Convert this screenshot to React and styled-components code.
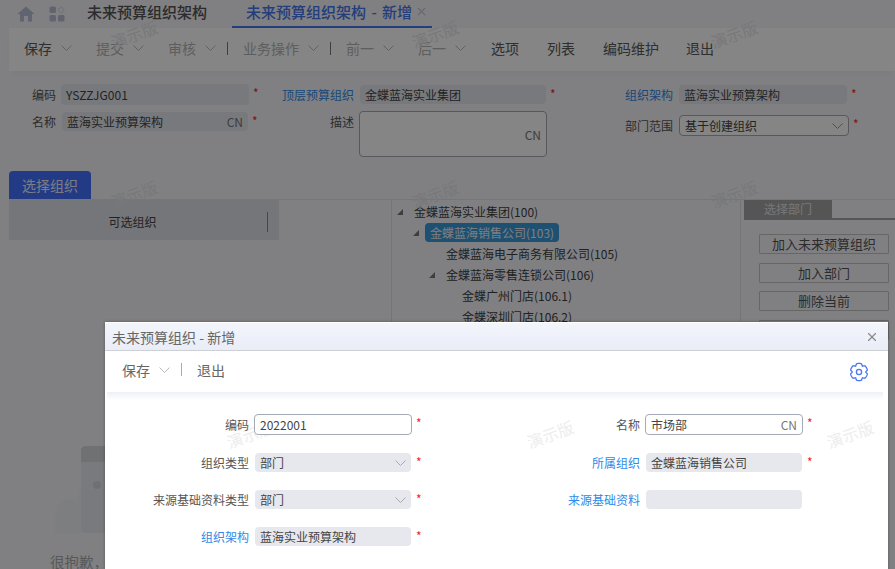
import React from "react";
import styled, { createGlobalStyle } from "styled-components";
import { X } from "lucide-react";

const GlobalStyle = createGlobalStyle`
  html, body { margin: 0; padding: 0; }
  body {
    font-family: "Noto Sans CJK SC", "Noto Sans", sans-serif;
    font-size: 12px;
    color: #444;
  }
`;

const Page = styled.div`
  position: relative;
  width: 895px;
  height: 569px;
  overflow: hidden;
  background: #f5f6f9;
`;

const Overlay = styled.div`
  position: absolute;
  inset: 0;
  background: rgba(0, 0, 0, 0.48);
`;

const Watermark = styled.span`
  position: absolute;
  left: ${(p) => p.$x}px;
  top: ${(p) => p.$y}px;
  width: 48px;
  font-size: 16px;
  line-height: 22px;
  color: ${(p) => p.$color || "#e6e7ea"};
  transform: rotate(-20deg);
  white-space: nowrap;
`;

/* top tabs */
const TopBar = styled.div`
  display: flex;
  align-items: center;
  height: 28px;
  padding-left: 17px;
`;
const IconSlot = styled.span`
  display: flex;
  margin-right: ${(p) => p.$gap}px;
`;
const PageTitle = styled.div`
  font-size: 15px;
  font-weight: 500;
  line-height: 24px;
  padding-bottom: 4px;
  color: #555;
  margin-right: 25px;
`;
const ActiveTab = styled.div`
  display: flex;
  align-items: center;
  justify-content: space-between;
  box-sizing: border-box;
  width: 200px;
  height: 28px;
  padding: 0 4px 4px 14px;
  border-bottom: 2px solid #4675ee;
  font-size: 15px;
  font-weight: 500;
  word-spacing: 2px;
  white-space: nowrap;
  color: #4675ee;
  svg { color: #c6cad6; }
`;

/* toolbar */
const Toolbar = styled.div`
  display: flex;
  align-items: center;
  box-sizing: border-box;
  height: 43px;
  margin-left: 9px;
  padding: 0 0 3px 15px;
  background: #fff;
  font-size: 14px;
  box-shadow: 0 4px 6px -1px rgba(0, 0, 0, 0.04);
`;
const ToolItem = styled.span`
  display: flex;
  align-items: center;
  gap: 9px;
  margin-right: ${(p) => p.$gap ?? 24}px;
  color: ${(p) => (p.$muted ? "#b4b4b4" : "#5a5a5a")};
`;
const ToolDivider = styled.i`
  width: 1px;
  height: 13px;
  margin: 0 15px 0 -13px;
  background: #777;
`;
const Chevron = ({ color = "#b8bac0" }) => (
  <svg width="11" height="6" viewBox="0 0 11 6" fill="none">
    <polyline points="0.5,0.5 5.5,5.5 10.5,0.5" stroke={color} strokeWidth="1" />
  </svg>
);

/* form bits, shared by page and dialog */
const Field = styled.div`
  display: flex;
  align-items: ${(p) => (p.$top ? "flex-start" : "center")};
  padding-left: ${(p) => p.$inset ?? 0}px;
`;
const Label = styled.label`
  flex: none;
  width: ${(p) => p.$w}px;
  margin-right: ${(p) => p.$gap ?? 5}px;
  text-align: right;
  white-space: nowrap;
  line-height: ${(p) => (p.$top ? "21px" : "inherit")};
  color: ${(p) => (p.$link ? "#2f8ae8" : "#555")};
`;
const Control = styled.div`
  flex: none;
  display: flex;
  align-items: center;
  justify-content: space-between;
  box-sizing: border-box;
  width: ${(p) => p.$w}px;
  height: ${(p) => p.$h ?? 19}px;
  padding: 0 5px;
  border-radius: 4px;
  border: ${(p) => (p.$bordered ? "1px solid #a5a9b5" : "none")};
  background: ${(p) => (p.$bordered ? "#fff" : "#e6e8ee")};
  color: #444;
  white-space: nowrap;
`;
const TextAreaBox = styled(Control)`
  justify-content: flex-end;
`;
const Suffix = styled.span`
  color: #777;
  font-size: 12px;
`;
const Star = styled.span`
  margin-left: ${(p) => p.$gap ?? 4}px;
  line-height: 1;
  color: #f5222d;
  font-size: 12px;
  align-self: flex-start;
  padding-top: 3px;
`;

/* master form */
const TopForm = styled.div`
  display: flex;
  height: 100px;
`;
const FormColumn = styled.div`
  display: flex;
  flex-direction: column;
  flex: none;
  width: ${(p) => p.$w}px;
  padding-top: ${(p) => p.$top}px;
  gap: ${(p) => p.$gap}px;
`;

/* tabs and panels */
const TabStrip = styled.div`
  display: flex;
  padding-left: 9px;
`;
const BlueTab = styled.div`
  width: 82px;
  height: 28px;
  line-height: 28px;
  text-align: center;
  border-radius: 4px 4px 0 0;
  background: #4470ff;
  color: #eef;
  font-size: 14px;
`;
const Panels = styled.div`
  display: flex;
  height: 370px;
  margin-left: 9px;
  border-top: 1px solid #e2e2e2;
`;
const LeftPanel = styled.div`
  flex: none;
  width: 382px;
`;
const ListHeader = styled.div`
  display: flex;
  align-items: center;
  box-sizing: border-box;
  width: 270px;
  height: 40px;
  padding-top: 4px;
  background: #e0e2e8;
`;
const HeaderCell = styled.div`
  width: 259px;
  height: 20px;
  line-height: 20px;
  padding-right: 11px;
  box-sizing: border-box;
  text-align: center;
  border-right: 1px solid #888;
  color: #444;
`;
const EmptyState = styled.div`
  display: flex;
  flex-direction: column;
  align-items: flex-start;
  padding: 206px 0 0 36px;
`;
const EmptyText = styled.div`
  margin-top: 19px;
  padding-left: 5px;
  font-size: 14.5px;
  line-height: 20px;
  color: #aaa;
  white-space: nowrap;
`;
const TreePanel = styled.div`
  flex: none;
  width: 349px;
  box-sizing: border-box;
  padding-top: 1px;
  border-left: 1px solid #e0e0e0;
`;
const TreeRow = styled.div`
  display: flex;
  align-items: center;
  height: 21px;
  padding-left: ${(p) => 5 + p.$level * 16}px;
  white-space: nowrap;
  color: #3f3f3f;
`;
const TreeArrow = styled.i`
  flex: none;
  width: 0;
  height: 0;
  margin-right: 11px;
  border-style: solid;
  border-width: 0 0 6px 6px;
  border-color: transparent transparent ${(p) => (p.$hidden ? "transparent" : "#777")} transparent;
`;
const TreeNode = styled.span`
  height: 19px;
  line-height: 19px;
  padding: 0 5px;
  margin-left: -5px;
  border-radius: 4px;
  background: ${(p) => (p.$selected ? "#3a9ad8" : "transparent")};
  color: ${(p) => (p.$selected ? "#f3f3f3" : "inherit")};
`;
const SidePanel = styled.div`
  flex: 1;
  padding-left: 3px;
  border-left: 1px solid #e0e0e0;
`;
const SideTabs = styled.div`
  height: 18px;
  border-bottom: 2px solid #a3a3a3;
`;
const SideTab = styled.div`
  width: 88px;
  height: 18px;
  line-height: 18px;
  text-align: center;
  background: #a3a3a3;
  color: #e6e6e6;
`;
const SideButtons = styled.div`
  display: flex;
  flex-direction: column;
  gap: 8.67px;
  padding: 14px 0 0 15px;
`;
const SideButton = styled.div`
  box-sizing: border-box;
  width: 130px;
  height: 20px;
  line-height: 18px;
  text-align: center;
  font-size: 13px;
  border: 1px solid #c4c4c4;
  border-radius: 1px;
  color: #555;
`;

/* dialog */
const Modal = styled.div`
  position: absolute;
  left: 105px;
  top: 322px;
  width: 783px;
  height: 300px;
  box-sizing: border-box;
  background: #fff;
  border-top: 1px solid #fff;
  box-shadow: 0 0 3px rgba(0, 0, 0, 0.3);
`;
const ModalTitle = styled.div`
  display: flex;
  align-items: center;
  justify-content: space-between;
  box-sizing: border-box;
  height: 28px;
  padding: 0 9px 0 7px;
  font-size: 14px;
  color: #666;
  background: linear-gradient(#f3f5fb, #e9edf7);
  border-bottom: 1px solid #cfd0d4;
  svg { color: #888; }
`;
const ModalToolbar = styled.div`
  display: flex;
  align-items: center;
  box-sizing: border-box;
  height: 41px;
  padding: 0 19px 4px 17px;
  font-size: 14px;
  color: #666;
`;
const ModalDivider = styled.i`
  width: 1px;
  height: 13px;
  margin: 0 15px 0 11px;
  background: #aaa;
`;
const SaveItem = styled.span`
  display: flex;
  align-items: center;
  gap: 9px;
`;
const GearSlot = styled.span`
  display: flex;
  margin-left: auto;
  margin-top: 4px;
`;
const ModalShade = styled.div`
  height: 8px;
  margin: 0 5px 0 2px;
  background: linear-gradient(#eef0f6, #fff);
`;
const ModalForm = styled.div`
  position: relative;
  display: grid;
  grid-template-columns: 391px 391px;
  row-gap: 18px;
  padding-top: 14px;
`;

const HomeIcon = () => (
  <svg width="18" height="16" viewBox="0 0 18 16">
    <path
      d="M9 0.5 L17.5 8 L15 8 L15 15.5 L11 15.5 L11 10 L7 10 L7 15.5 L3 15.5 L3 8 L0.5 8 Z"
      fill="#b8c0d8"
    />
  </svg>
);

const AppsIcon = () => (
  <svg width="16" height="16" viewBox="0 0 16 16" fill="#b8c0d8">
    <rect x="0.5" y="0.5" width="6.5" height="6.5" rx="1.5" />
    <rect x="0.5" y="9" width="6.5" height="6.5" rx="1.5" />
    <rect x="9" y="9" width="6.5" height="6.5" rx="1.5" />
    <path d="M12.2 0.8 L15.4 4 L12.2 7.2 L9 4 Z" fill="none" stroke="#c8cede" strokeWidth="0.8" />
  </svg>
);

// six flat lobes with narrow notches between them
const gearOutline = Array.from({ length: 144 }, (_, i) => {
  const a = (i / 144) * Math.PI * 2;
  const r = 8.6 - 1.9 * Math.pow(Math.max(0, -Math.cos(6 * a)), 2);
  return `${(10 + r * Math.sin(a)).toFixed(2)},${(10 - r * Math.cos(a)).toFixed(2)}`;
}).join(" ");

const GearIcon = () => (
  <svg width="20" height="20" viewBox="0 0 20 20" fill="none" stroke="#4a76f0" strokeWidth="1.3">
    <polygon points={gearOutline} strokeLinejoin="round" />
    <circle cx="10" cy="10" r="2.6" />
  </svg>
);

const EmptyPicture = () => (
  <svg width="190" height="87" viewBox="0 0 190 87">
    <path d="M10 65 C12 55 24 52 32 54 C34 42 42 34 60 32 L60 87 L10 87 Z" fill="#f0f1f4" />
    <rect x="36" y="0" width="130" height="87" rx="5" fill="#e8eaef" />
    <path d="M36 16 L36 5 Q36 0 41 0 L161 0 Q166 0 166 5 L166 16 Z" fill="#d6d8dd" />
    <circle cx="52" cy="39" r="4" fill="#d4d6db" />
  </svg>
);

const marks = [
  [110, 23],
  [411, 23],
  [710, 23],
  [110, 183],
  [411, 183],
  [710, 183],
];
const modalMarks = [
  [121, 100],
  [421, 100],
  [721, 100],
];

const tools = [
  { text: "保存", arrow: true },
  { text: "提交", arrow: true, muted: true },
  { text: "审核", arrow: true, muted: true },
  { divider: true },
  { text: "业务操作", arrow: true, muted: true },
  { divider: true },
  { text: "前一", arrow: true, muted: true },
  { text: "后一", arrow: true, muted: true, gap: 25 },
  { text: "选项", gap: 28 },
  { text: "列表", gap: 28 },
  { text: "编码维护", gap: 27 },
  { text: "退出" },
];

const tree = [
  { level: 0, text: "金蝶蓝海实业集团(100)", open: true },
  { level: 1, text: "金蝶蓝海销售公司(103)", open: true, selected: true },
  { level: 2, text: "金蝶蓝海电子商务有限公司(105)" },
  { level: 2, text: "金蝶蓝海零售连锁公司(106)", open: true },
  { level: 3, text: "金蝶广州门店(106.1)" },
  { level: 3, text: "金蝶深圳门店(106.2)" },
];

export default function App() {
  return (
    <Page>
      <GlobalStyle />
      <TopBar>
        <IconSlot $gap={14}><HomeIcon /></IconSlot>
        <IconSlot $gap={22}><AppsIcon /></IconSlot>
        <PageTitle>未来预算组织架构</PageTitle>
        <ActiveTab>
          未来预算组织架构 - 新增
          <X size={13} strokeWidth={2.2} />
        </ActiveTab>
      </TopBar>

      <Toolbar>
        {tools.map((t, i) =>
          t.divider ? (
            <ToolDivider key={i} />
          ) : (
            <ToolItem key={i} $muted={t.muted} $gap={t.gap}>
              {t.text}
              {t.arrow && <Chevron />}
            </ToolItem>
          )
        )}
      </Toolbar>

      <TopForm>
        <FormColumn $w={282} $top={13} $gap={7}>
          <Field $inset={9}>
            <Label $w={47} $gap={5}>编码</Label>
            <Control $w={188} $h={21}>YSZZJG001</Control>
            <Star>*</Star>
          </Field>
          <Field $inset={9}>
            <Label $w={47} $gap={6}>名称</Label>
            <Control $w={186}>
              蓝海实业预算架构
              <Suffix>CN</Suffix>
            </Control>
            <Star>*</Star>
          </Field>
        </FormColumn>
        <FormColumn $w={343} $top={14} $gap={7}>
          <Field>
            <Label $w={72} $gap={6} $link>顶层预算组织</Label>
            <Control $w={186}>金蝶蓝海实业集团</Control>
            <Star>*</Star>
          </Field>
          <Field $top>
            <Label $w={72} $top>描述</Label>
            <TextAreaBox $w={188} $h={46} $bordered>
              <Suffix>CN</Suffix>
            </TextAreaBox>
          </Field>
        </FormColumn>
        <FormColumn $w={270} $top={14} $gap={11}>
          <Field>
            <Label $w={48} $gap={6} $link>组织架构</Label>
            <Control $w={168}>蓝海实业预算架构</Control>
            <Star>*</Star>
          </Field>
          <Field>
            <Label $w={48} $gap={6}>部门范围</Label>
            <Control $w={170} $h={21} $bordered>
              基于创建组织
              <Chevron color="#999" />
            </Control>
            <Star>*</Star>
          </Field>
        </FormColumn>
      </TopForm>

      <TabStrip>
        <BlueTab>选择组织</BlueTab>
      </TabStrip>

      <Panels>
        <LeftPanel>
          <ListHeader>
            <HeaderCell>可选组织</HeaderCell>
          </ListHeader>
          <EmptyState>
            <EmptyPicture />
            <EmptyText>很抱歉，没有找到相关数据</EmptyText>
          </EmptyState>
        </LeftPanel>

        <TreePanel>
          {tree.map((n) => (
            <TreeRow key={n.text} $level={n.level}>
              <TreeArrow $hidden={!n.open} />
              <TreeNode $selected={n.selected}>{n.text}</TreeNode>
            </TreeRow>
          ))}
        </TreePanel>

        <SidePanel>
          <SideTabs>
            <SideTab>选择部门</SideTab>
          </SideTabs>
          <SideButtons>
            <SideButton>加入未来预算组织</SideButton>
            <SideButton>加入部门</SideButton>
            <SideButton>删除当前</SideButton>
            <SideButton>删除全部</SideButton>
          </SideButtons>
        </SidePanel>
      </Panels>

      {marks.map(([x, y]) => (
        <Watermark key={`${x}-${y}`} $x={x} $y={y}>演示版</Watermark>
      ))}

      <Overlay />

      <Modal>
        <ModalTitle>
          未来预算组织 - 新增
          <X size={14} strokeWidth={2} />
        </ModalTitle>
        <ModalToolbar>
          <SaveItem>
            保存
            <Chevron />
          </SaveItem>
          <ModalDivider />
          退出
          <GearSlot>
            <GearIcon />
          </GearSlot>
        </ModalToolbar>
        <ModalShade />
        {modalMarks.map(([x, y]) => (
          <Watermark key={x} $x={x} $y={y} $color="#ededed">演示版</Watermark>
        ))}
        <ModalForm>
          <Field>
            <Label $w={144}>编码</Label>
            <Control $w={158} $h={21} $bordered>2022001</Control>
            <Star>*</Star>
          </Field>
          <Field>
            <Label $w={144}>名称</Label>
            <Control $w={158} $h={21} $bordered>
              市场部
              <Suffix>CN</Suffix>
            </Control>
            <Star>*</Star>
          </Field>
          <Field>
            <Label $w={144} $gap={6}>组织类型</Label>
            <Control $w={156}>
              部门
              <Chevron color="#aaa" />
            </Control>
            <Star $gap={5}>*</Star>
          </Field>
          <Field>
            <Label $w={144} $gap={6} $link>所属组织</Label>
            <Control $w={156}>金蝶蓝海销售公司</Control>
            <Star $gap={5}>*</Star>
          </Field>
          <Field>
            <Label $w={144} $gap={6}>来源基础资料类型</Label>
            <Control $w={156}>
              部门
              <Chevron color="#aaa" />
            </Control>
            <Star $gap={5}>*</Star>
          </Field>
          <Field>
            <Label $w={144} $gap={6} $link>来源基础资料</Label>
            <Control $w={156} />
          </Field>
          <Field>
            <Label $w={144} $gap={6} $link>组织架构</Label>
            <Control $w={156}>蓝海实业预算架构</Control>
            <Star $gap={5}>*</Star>
          </Field>
        </ModalForm>
      </Modal>
    </Page>
  );
}
